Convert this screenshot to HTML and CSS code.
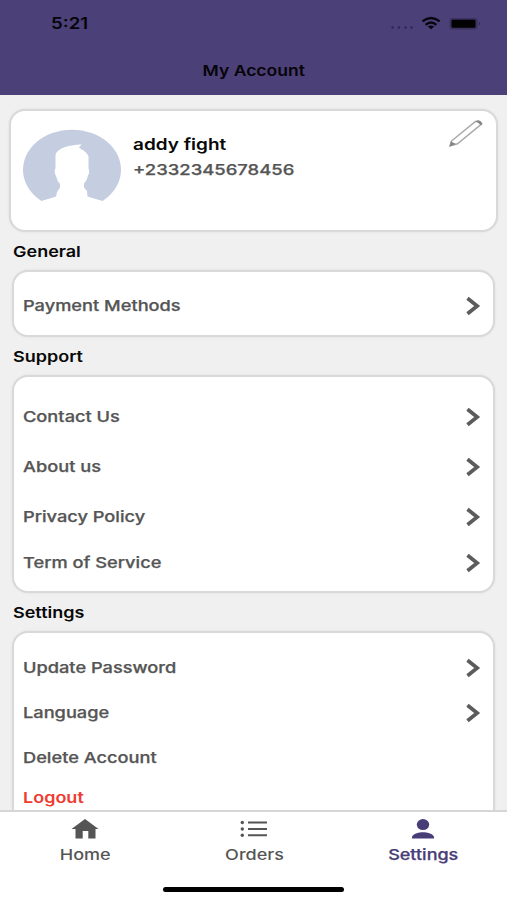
FILE: index.html
```html
<!DOCTYPE html>
<html lang="en">
<head>
<meta charset="utf-8">
<title>My Account</title>
<link rel="stylesheet" href="styles.css">
</head>
<body>
<svg class="defs" aria-hidden="true"><symbol id="chevron" viewBox="0 0 16 20"><path d="M2.5 2.2 12.2 10 2.5 17.8" fill="none" stroke="#5c5c5c" stroke-width="3.700"/></symbol></svg>
<div class="screen">
  <header class="header">
    <div class="status">
      <span class="time t">5:21</span>
      <svg class="status-icons" viewBox="0 0 92 20" width="92" height="20">
        <g fill="#2e2457"><circle cx="2.5" cy="13.500" r="1.200"/><circle cx="9" cy="13.500" r="1.200"/><circle cx="15.500" cy="13.500" r="1.200"/><circle cx="21.500" cy="13.500" r="1.200"/></g>
        <g fill="none" stroke="#08050f" stroke-width="2.400"><path d="M32.500 7.400Q41 .6 49.700 7.400"/><path d="M35.600 10.800Q41 6.300 46.400 10.800"/></g>
        <path d="M37.800 12.600Q41 10.200 44.200 12.600L41 15.300Z" fill="#08050f"/>
        <rect x="59.500" y="4" width="28" height="11.500" rx="3" fill="#3d315f"/>
        <rect x="61.500" y="5.800" width="24" height="7.900" rx="1.200" fill="#020203"/>
        <path d="M89 8.200Q91 9.700 89 11.200Z" fill="#2a2146"/>
      </svg>
    </div>
    <h1 class="title"><span class="t">My Account</span></h1>
  </header>
  <main class="content">
    <section class="profile card">
      <svg class="avatar" viewBox="0 0 98 74" width="98" height="74">
        <path d="M18.500 71A49 40 0 1 1 79.500 71L64.500 66.500L64 61L61 57.500V53.500Q64.500 50 65 45.500Q67 42.500 65.500 38V26Q62 20.500 58.500 19.500L56 17.500L58.500 14.500C46 15 33 18 32.500 26V38Q30.500 42 33 46Q34 51 37 54V57.500L34 62L33 66.500Z" fill="#c5cde0"/>
      </svg>
      <div class="person">
        <span class="name t">addy fight</span>
        <span class="phone t">+2332345678456</span>
      </div>
      <svg class="pencil" viewBox="0 0 36 30" width="36" height="30">
        <g fill="none" stroke="#aaa" stroke-width="1.500"><path d="M3.500 22 27.500 2.500Q31 .8 33.500 5L9.500 24.800 2 27Z"/></g>
        <path d="M3 22.500 8 25 1.500 27.500ZM27.500 2.800Q32-.5 34.500 5L32.500 6.200Q31 3.500 27.500 2.800Z" fill="#858585"/>
      </svg>
    </section>
    <h2 class="heading general"><span class="t">General</span></h2>
    <section class="card list payment">
      <div class="row"><span class="t">Payment Methods</span><svg class="chev"><use href="#chevron"/></svg></div>
    </section>
    <h2 class="heading"><span class="t">Support</span></h2>
    <section class="card list support">
      <div class="row tall"><span class="t">Contact Us</span><svg class="chev"><use href="#chevron"/></svg></div>
      <div class="row tall"><span class="t">About us</span><svg class="chev"><use href="#chevron"/></svg></div>
      <div class="row tall"><span class="t">Privacy Policy</span><svg class="chev"><use href="#chevron"/></svg></div>
      <div class="row short"><span class="t">Term of Service</span><svg class="chev"><use href="#chevron"/></svg></div>
    </section>
    <h2 class="heading"><span class="t">Settings</span></h2>
    <section class="card list settings">
      <div class="row"><span class="t">Update Password</span><svg class="chev"><use href="#chevron"/></svg></div>
      <div class="row"><span class="t">Language</span><svg class="chev"><use href="#chevron"/></svg></div>
      <div class="row"><span class="t">Delete Account</span></div>
      <div class="row logout"><span class="t">Logout</span></div>
    </section>
  </main>
  <footer class="footer">
    <nav class="tabs">
      <a class="tab"><svg viewBox="0 0 28 20" width="28" height="20"><path d="M14 0 27.500 10H24.500V19.500H17.300V12H11.700V19.500H4.500V10H.5Z" fill="#555"/></svg><span class="t">Home</span></a>
      <a class="tab"><svg viewBox="0 0 28 20" width="28" height="20"><g fill="#555"><circle cx="2.300" cy="3.500" r="1.700"/><circle cx="2.300" cy="10" r="1.700"/><circle cx="2.300" cy="16.300" r="1.700"/><path d="M8 2.500H27V4.500H8ZM8 9H27V11H8ZM8 15.300H27V17.300H8Z"/></g></svg><span class="t">Orders</span></a>
      <a class="tab active"><svg viewBox="0 0 28 20" width="28" height="20"><g fill="#493d78"><ellipse cx="14" cy="5.600" rx="6.200" ry="5.500"/><path d="M3 19.500V17.500C5 14.500 10 13.200 14 13.200S23 14.500 25 17.500V19.500Z"/></g></svg><span class="t">Settings</span></a>
    </nav>
    <div class="home-bar"></div>
  </footer>
</div>
</body>
</html>
```
FILE: styles.css
```css
* { box-sizing: border-box; }
body { margin: 0; font-family: Inter, "Liberation Sans", sans-serif; font-size: 15px; color: #555; }
.defs { display: none; }
.screen { width: 507px; height: 900px; display: flex; flex-direction: column; overflow: hidden; background: #f0f0f0; }
.t { display: inline-block; white-space: nowrap; transform: scaleX(1.2); transform-origin: left center; line-height: 20px; }
.header { flex: none; height: 95px; background: #4c4078; color: #060409; }
.status { height: 46px; padding: 14px 25px 0 51px; display: flex; justify-content: space-between; }
.time { font-weight: 600; font-size: 15.5px; }
.title { margin: 15px 0 0; text-align: center; font-size: 15px; line-height: 20px; font-weight: 600; }
.title .t { transform: scaleX(1.17); transform-origin: center; }
.content { flex: 1; min-height: 0; overflow: hidden; padding-top: 14px; }
.card { background: #fff; border: 2px solid #d9d9d9; border-radius: 16px; box-shadow: 0 0 2px #d9d9d9; }
.profile { height: 123px; margin: 0 9px; display: flex; padding: 19px 12px 0; }
.avatar { flex: none; overflow: visible; }
.person { display: flex; flex-direction: column; margin-left: 12px; flex: 1; padding-top: 5px; align-items: flex-start; gap: 5px; }
.name { font-weight: 600; color: #080808; font-size: 15.8px; }
.phone { font-weight: 500; transform: scaleX(1.23); -webkit-text-stroke: .25px currentColor; }
.pencil { margin-top: -11px; }
.heading { margin: 0; height: 38px; padding: 10px 13px 0; font-size: 15px; line-height: 20px; font-weight: 600; color: #080808; }
.list { margin: 0 12px; padding: 0 12px 0 9px; font-weight: 500; }
.list .t { transform: scaleX(1.215); -webkit-text-stroke: .25px currentColor; }
.row { display: flex; height: 45px; align-items: center; justify-content: space-between; }
.chev { width: 16px; height: 20px; }
.payment { height: 67px; padding-top: 11px; }
.support { height: 218px; padding-top: 15px; }
.tall { height: 50px; }
.short { height: 42px; }
.settings { height: 220px; padding-top: 12px; }
.row.logout { height: 36px; color: #f03a30; font-weight: 600; }
.logout .t { transform: scaleX(1.2); -webkit-text-stroke: 0; }
.footer { flex: none; height: 90px; background: #fff; border-top: 2px solid #d6d6d6; }
.tabs { display: grid; grid-template-columns: repeat(3, 1fr); height: 74px; }
.tab { display: flex; flex-direction: column; align-items: center; padding: 7px 0 0 1px; gap: 6px; font-weight: 500; }
.tab .t { transform-origin: center; }
.active { color: #493d78; }
.active .t { -webkit-text-stroke: .25px currentColor; }
.home-bar { width: 181px; height: 5px; margin: 1px auto 0; border-radius: 3px; background: #000; }
```
